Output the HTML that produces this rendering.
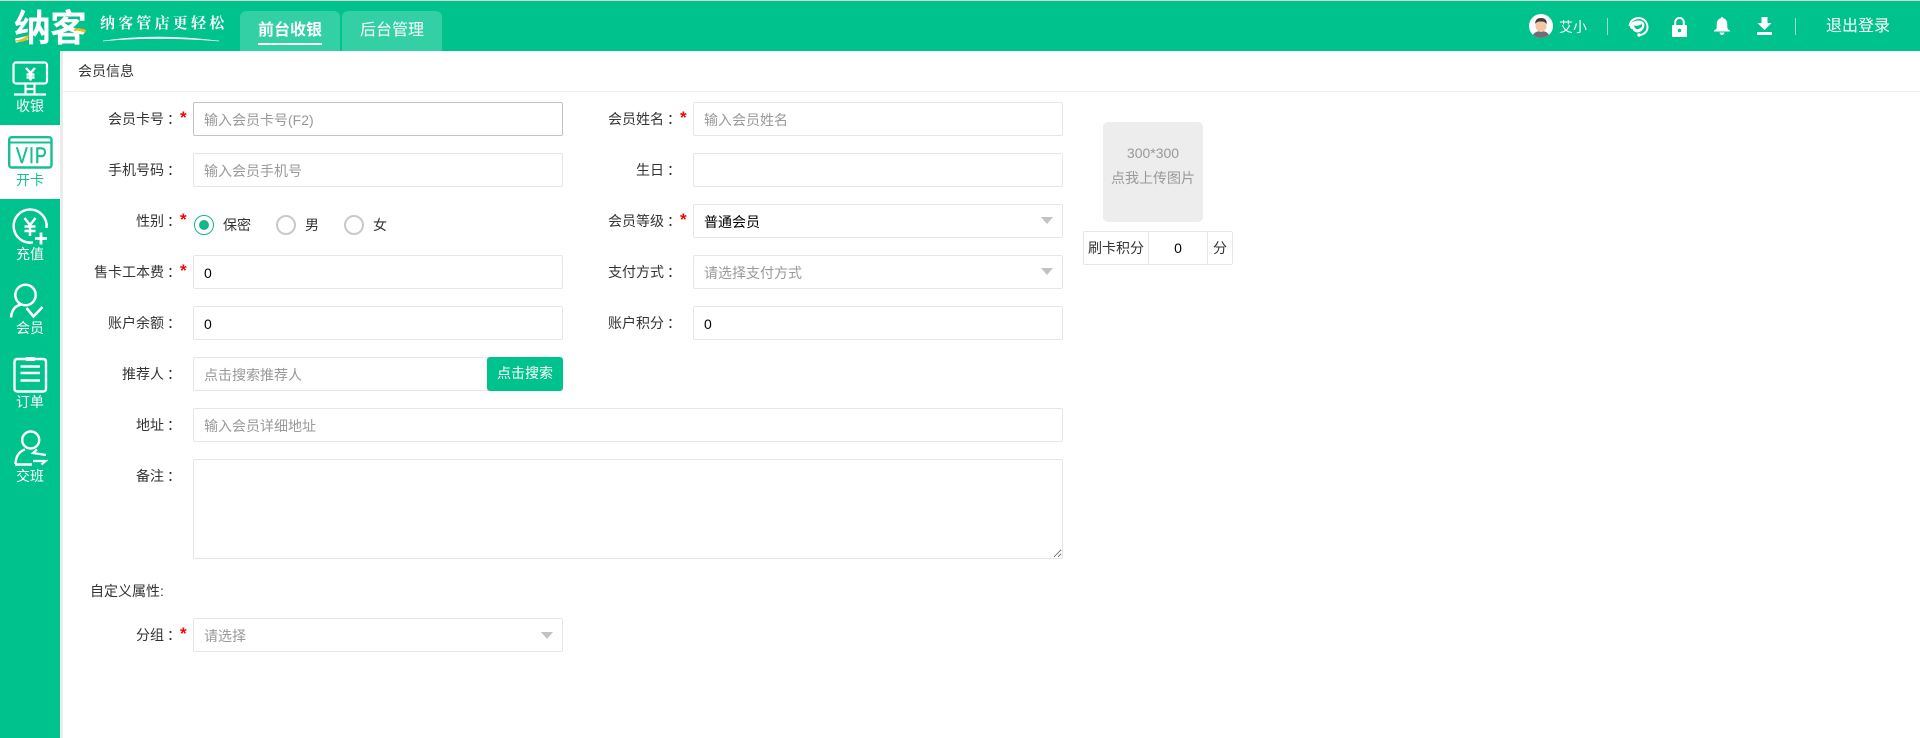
<!DOCTYPE html>
<html lang="zh">
<head>
<meta charset="utf-8">
<title>会员信息</title>
<style>
*{box-sizing:border-box}
html,body{margin:0;padding:0;width:1920px;height:738px;overflow:hidden;background:#fff}
body{position:relative;font-family:"Liberation Sans","Noto Sans CJK SC",sans-serif;font-size:14px;color:#333}
.a{position:absolute}
.top{left:0;top:0;width:1920px;height:51px;background:#00c28c;border-top:1px solid #cfd8d5}
.tab{top:11px;width:100px;height:40px;background:#33cfa5;border-radius:6px 6px 0 0}
.tabt{top:19px;height:23px;line-height:23px;font-size:16px;color:#fff;white-space:nowrap}
.side{left:0;top:51px;width:60px;height:687px;background:#00c28c}
.strip{left:60px;top:51px;width:3px;height:687px;background:#ececec}
.vip{left:0;top:125px;width:60px;height:74px;background:#fff}
.st{left:0;width:60px;text-align:center;color:#fff;font-size:14px;line-height:18px;height:18px}
.l{left:0;height:20px;line-height:20px;text-align:right;white-space:nowrap;color:#333}
.l i{font-style:normal;position:relative;left:3px}
.star{color:#f00;height:20px;line-height:20px;font-size:17px;font-weight:700;margin-top:1px}
.i{height:34px;background:#fff;border:1px solid #e6e6e6;border-radius:2px;padding:0 10px;line-height:34px;color:#000;white-space:nowrap}
.ph{color:#999}
.c1{left:193px;width:370px}
.c2{left:693px;width:370px}
.w{left:193px;width:870px}
.tri{width:0;height:0;border-left:6px solid transparent;border-right:6px solid transparent;border-top:7px solid #c2c2c2}
.r{width:20px;height:20px;border-radius:50%;border:2px solid #c9c9c9;background:#fff}
.rt{height:20px;line-height:20px;color:#333}
textarea{display:block;margin:0;padding:0;outline:0;font:inherit}
</style>
</head>
<body>
<div class="a top"></div>

<!-- logo -->
<div class="a" style="left:14px;top:8px;height:42px;line-height:42px;font-size:37px;font-weight:700;color:#fff;letter-spacing:-1px;white-space:nowrap">纳客</div>
<svg class="a" style="left:10px;top:8px" width="85" height="40" viewBox="0 0 85 40"><path d="M5 32 Q12 33 19 26 L17 32 Q11 35 5 33Z" fill="#f5b921"/><path d="M64 21 Q70 19 76 22 L75 25 Q70 22 64 23Z" fill="#f5b921"/></svg>
<div class="a" style="left:100px;top:11px;height:24px;line-height:24px;font-family:'Noto Serif CJK SC',serif;font-size:15px;font-weight:700;letter-spacing:3.2px;color:#fff;white-space:nowrap">纳客管店更轻松</div>
<svg class="a" style="left:100px;top:32px" width="125" height="12" viewBox="0 0 125 12"><path d="M3 9 Q55 1 119 9 Q55 4 3 9Z" fill="#fff" stroke="#fff" stroke-width=".5"/></svg>

<!-- tabs -->
<div class="a tab" style="left:240px"></div>
<div class="a tab" style="left:342px"></div>
<div class="a tabt" style="left:258px;font-weight:700">前台收银</div>
<div class="a" style="left:258px;top:43px;width:64px;height:2px;background:#fff"></div>
<div class="a tabt" style="left:360px">后台管理</div>

<!-- right of the header -->
<svg class="a" style="left:1529px;top:14px" width="24" height="24" viewBox="0 0 24 24"><defs><clipPath id="av"><circle cx="12" cy="12" r="12"/></clipPath></defs><circle cx="12" cy="12" r="12" fill="#fff"/><g clip-path="url(#av)"><path d="M3 24 Q4 17 12 17 Q20 17 21 24Z" fill="#6f6f78"/><ellipse cx="12" cy="11.5" rx="5.5" ry="6.5" fill="#f3c6a5"/><path d="M6.2 10 Q6 4 12 4 Q18 4 17.8 10 Q15 7 12 7.6 Q8 7.2 6.2 10Z" fill="#3f3f3f"/></g></svg>
<div class="a" style="left:1559px;top:17px;height:20px;line-height:20px;color:#fff">艾小</div>
<div class="a" style="left:1607px;top:18px;width:1px;height:17px;background:rgba(255,255,255,.55)"></div>
<svg class="a" style="left:1627px;top:14px" width="23" height="24" viewBox="0 0 23 24"><path d="M2.500 12 A9 9 0 1 1 19.500 17 Q17 20.500 13 21" fill="none" stroke="#fff" stroke-width="2"/><path d="M3 12 Q5 6.500 11 6.500 Q17 6.500 17.500 11 Q17 17 11 18.500 Q7 18.500 5.500 15 Q3 15 3 12Z" fill="#fff"/><path d="M7 11.500 Q11 12.500 15 10 L15 12.500 Q13 15.500 9.500 15 Q7.500 14 7 11.500Z" fill="#00c28c"/><circle cx="12" cy="21" r="1.700" fill="#fff"/></svg>
<svg class="a" style="left:1672px;top:17px" width="15" height="20" viewBox="0 0 15 20"><path d="M3.2 8.5 V5.2 A4.3 4.3 0 0 1 11.8 5.2 V8.5" fill="none" stroke="#fff" stroke-width="2"/><rect x="0" y="8" width="15" height="12" rx="1" fill="#fff"/><circle cx="7.5" cy="13.5" r="1.7" fill="#00c28c"/></svg>
<svg class="a" style="left:1714px;top:17px" width="16" height="18" viewBox="0 0 16 18"><path d="M8 0 Q9.2 0 9.3 1.3 Q13.2 2.4 13.3 7 V10.5 Q13.5 12.5 16 13.5 V14.5 H0 V13.5 Q2.5 12.5 2.7 10.5 V7 Q2.8 2.4 6.7 1.3 Q6.8 0 8 0Z" fill="#fff"/><path d="M5.5 15.5 H10.5 Q9.8 18 8 18 Q6.2 18 5.5 15.5Z" fill="#fff"/></svg>
<svg class="a" style="left:1757px;top:17px" width="15" height="18" viewBox="0 0 15 18"><path d="M4.5 0 H10.5 V6 H14.5 L7.5 13 L0.5 6 H4.5Z" fill="#fff"/><rect x="0" y="15" width="15" height="3" fill="#fff"/></svg>
<div class="a" style="left:1795px;top:18px;width:1px;height:17px;background:rgba(255,255,255,.55)"></div>
<div class="a" style="left:1826px;top:15px;height:23px;line-height:23px;font-size:16px;color:#fff;white-space:nowrap">退出登录</div>

<!-- sidebar -->
<div class="a side"></div>
<div class="a strip"></div>
<div class="a vip"></div>

<svg class="a" style="left:0;top:51px" width="60" height="148" viewBox="0 0 60 148">
 <g fill="none" stroke="#fff" stroke-width="2.200">
  <rect x="13.500" y="11.500" width="33.500" height="21" rx="2.500"/>
  <path d="M25.500 33 V43 M34.500 33 V43 M25.500 38 H34.500 M14 43.500 H46"/>
  <path d="M26 17 L30.500 22 L35 17 M30.500 22 V29.500 M26.500 23.500 H34.500 M26.500 26.500 H34.500" stroke-width="2.400"/>
 </g>
 <g fill="none" stroke="#18bf91" stroke-width="2.400">
  <rect x="9.200" y="86.200" width="42.300" height="30.300" rx="2.500"/>
  <path d="M9 91.500 H51.500" stroke-width="2"/>
 </g>
</svg>
<div class="a" style="left:15.500px;top:145px;height:22px;line-height:22px;font-size:22px;letter-spacing:1.500px;color:#18bf91;-webkit-text-stroke:.5px #18bf91;white-space:nowrap;transform:scaleX(.8);transform-origin:0 0">VIP</div>

<svg class="a" style="left:0;top:199px" width="60" height="148" viewBox="0 0 60 148">
 <g fill="none" stroke="#fff" stroke-width="2.500">
  <path d="M46.500 29 A16.500 16.500 0 1 0 33 43.300"/>
  <path d="M24.500 19 L30 26 L35.500 19 M30 26 V37 M24.500 27.500 H35.500 M24.500 32 H35.500"/>
  <path d="M35 39.500 H47 M41 33.500 V45.500" stroke-width="2.800"/>
  <circle cx="25.500" cy="96" r="10.200"/>
  <path d="M11 118.500 Q12 107.500 21 105.500"/>
  <path d="M26.500 109 L33.500 117.500 L42.500 108" stroke-width="2.600"/>
 </g>
</svg>

<svg class="a" style="left:0;top:347px" width="60" height="148" viewBox="0 0 60 148">
 <g fill="none" stroke="#fff" stroke-width="2.400">
  <path d="M25 12 H17.500 Q14.500 12 14.500 15 V41.500 Q14.500 44.500 17.500 44.500 H43 Q46 44.500 46 41.500 V15 Q46 12 43 12 H35"/>
  <rect x="25.500" y="10.500" width="9.500" height="3" rx="1.500" fill="#fff" stroke-width="1"/>
  <path d="M20.500 19.500 H40 M20.500 26 H40 M20.500 33.500 H40"/>
  <circle cx="30.700" cy="93" r="8.500"/>
  <path d="M15.500 117 Q16 105.500 25 102.500 M15 117.500 H32"/>
  <path d="M37 102.500 L33 106 L46 108 M33 114 H45.500 L41.500 117.500" stroke-width="2.200"/>
 </g>
</svg>

<div class="a st" style="top:97px">收银</div>
<div class="a st" style="top:171px;color:#18bf91">开卡</div>
<div class="a st" style="top:245px">充值</div>
<div class="a st" style="top:319px">会员</div>
<div class="a st" style="top:393px">订单</div>
<div class="a st" style="top:467px">交班</div>

<!-- page head -->
<div class="a" style="left:78px;top:61px;height:20px;line-height:20px;color:#333">会员信息</div>
<div class="a" style="left:63px;top:91px;width:1857px;height:1px;background:#eee"></div>

<!-- column one -->
<div class="a l" style="top:109px;width:178px">会员卡号<i>：</i></div><div class="a star" style="left:180px;top:107px">*</div>
<div class="a i ph c1" style="top:102px;border-color:#c4c4c4">输入会员卡号(F2)</div>
<div class="a l" style="top:160px;width:178px">手机号码<i>：</i></div>
<div class="a i ph c1" style="top:153px">输入会员手机号</div>
<div class="a l" style="top:211px;width:178px">性别<i>：</i></div><div class="a star" style="left:180px;top:209px">*</div>
<div class="a r" style="left:194px;top:215px;border:1.500px solid #18b48a"></div>
<div class="a" style="left:199px;top:220px;width:10px;height:10px;border-radius:50%;background:#18b48a"></div>
<div class="a rt" style="left:223px;top:215px">保密</div>
<div class="a r" style="left:276px;top:215px"></div>
<div class="a rt" style="left:305px;top:215px">男</div>
<div class="a r" style="left:344px;top:215px"></div>
<div class="a rt" style="left:373px;top:215px">女</div>
<div class="a l" style="top:262px;width:178px">售卡工本费<i>：</i></div><div class="a star" style="left:180px;top:260px">*</div>
<div class="a i c1" style="top:255px">0</div>
<div class="a l" style="top:313px;width:178px">账户余额<i>：</i></div>
<div class="a i c1" style="top:306px">0</div>
<div class="a l" style="top:364px;width:178px">推荐人<i>：</i></div>
<div class="a i ph" style="left:193px;top:357px;width:296px">点击搜索推荐人</div>
<div class="a" style="left:487px;top:357px;width:76px;height:34px;background:#00c28c;border-radius:3px;color:#fff;text-align:center;line-height:33px">点击搜索</div>
<div class="a l" style="top:415px;width:178px">地址<i>：</i></div>
<div class="a i ph w" style="top:408px">输入会员详细地址</div>
<div class="a l" style="top:466px;width:178px">备注<i>：</i></div>
<textarea class="a" style="left:193px;top:459px;width:870px;height:100px;border:1px solid #e6e6e6;border-radius:2px;background:#fff"></textarea>
<div class="a" style="left:90px;top:581px;height:20px;line-height:20px;color:#333;white-space:nowrap">自定义属性:</div>
<div class="a l" style="top:625px;width:178px">分组<i>：</i></div><div class="a star" style="left:180px;top:623px">*</div>
<div class="a i ph c1" style="top:618px">请选择</div>
<div class="a tri" style="left:541px;top:632px"></div>

<!-- column two -->
<div class="a l" style="top:109px;width:678px">会员姓名<i>：</i></div><div class="a star" style="left:680px;top:107px">*</div>
<div class="a i ph c2" style="top:102px">输入会员姓名</div>
<div class="a l" style="top:160px;width:678px">生日<i>：</i></div>
<div class="a i c2" style="top:153px"></div>
<div class="a l" style="top:211px;width:678px">会员等级<i>：</i></div><div class="a star" style="left:680px;top:209px">*</div>
<div class="a i c2" style="top:204px">普通会员</div>
<div class="a tri" style="left:1041px;top:217px"></div>
<div class="a l" style="top:262px;width:678px">支付方式<i>：</i></div>
<div class="a i ph c2" style="top:255px">请选择支付方式</div>
<div class="a tri" style="left:1041px;top:268px"></div>
<div class="a l" style="top:313px;width:678px">账户积分<i>：</i></div>
<div class="a i c2" style="top:306px">0</div>

<!-- picture -->
<div class="a" style="left:1103px;top:122px;width:100px;height:100px;background:#ededed;border-radius:5px;text-align:center;color:#999">
 <div class="a" style="left:0;top:21px;width:100px;height:20px;line-height:20px">300*300</div>
 <div class="a" style="left:0;top:46px;width:100px;height:20px;line-height:20px">点我上传图片</div>
</div>
<div class="a" style="left:1083px;top:231px;width:66px;height:34px;border:1px solid #e6e6e6;border-radius:2px 0 0 2px;text-align:center;line-height:32px;color:#333">刷卡积分</div>
<div class="a" style="left:1148px;top:231px;width:60px;height:34px;border:1px solid #e6e6e6;text-align:center;line-height:32px;color:#000">0</div>
<div class="a" style="left:1207px;top:231px;width:26px;height:34px;border:1px solid #e6e6e6;border-radius:0 2px 2px 0;text-align:center;line-height:32px;color:#333">分</div>
</body>
</html>
